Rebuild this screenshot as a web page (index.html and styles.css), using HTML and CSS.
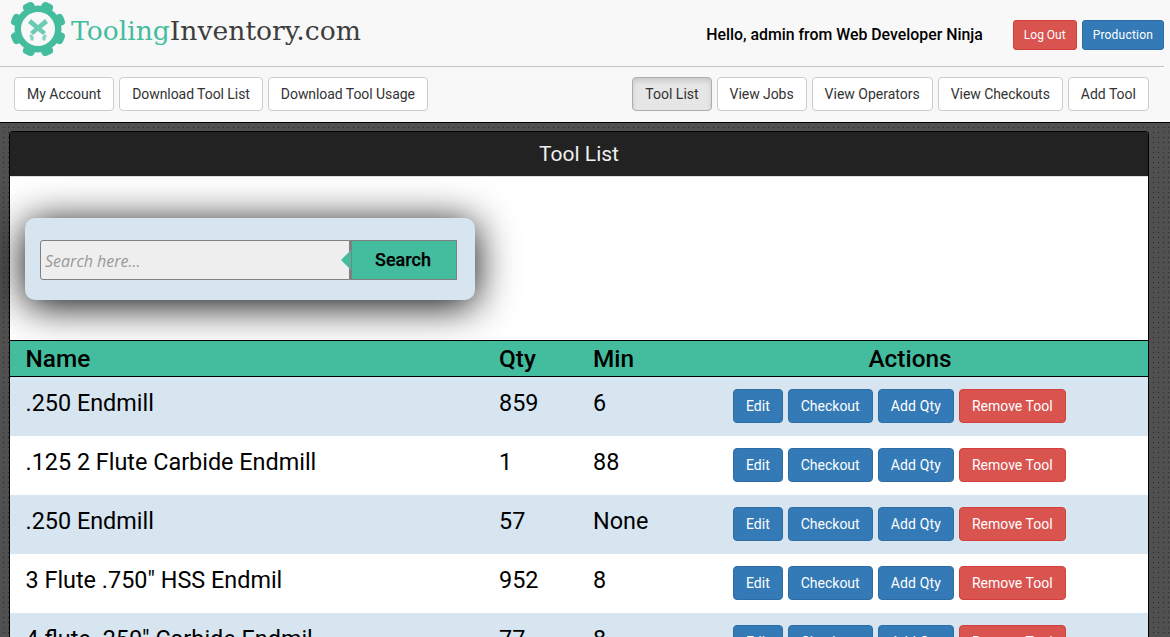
FILE: index.html
```html
<!DOCTYPE html>
<html lang="en">
<head>
  <meta charset="UTF-8">
  <title>Tool List</title>
  <meta name="viewport" content="width=device-width, initial-scale=1.0">
  <link rel="stylesheet" href="styles.css">
</head>
<body>

  <header class="topbar">
    <div class="brand">
      <svg class="brand-logo" width="60" height="60" viewBox="0 0 60 60">
        <g fill="#44bd9f">
          <rect x="24" y="1" width="12" height="56" rx="4" transform="rotate(22.5 30 29)"/>
          <rect x="24" y="1" width="12" height="56" rx="4" transform="rotate(67.5 30 29)"/>
          <rect x="24" y="1" width="12" height="56" rx="4" transform="rotate(112.5 30 29)"/>
          <rect x="24" y="1" width="12" height="56" rx="4" transform="rotate(157.5 30 29)"/>
          <circle cx="30" cy="29" r="23.5"/>
        </g>
        <circle cx="30" cy="29" r="17" fill="#f8f8f8"/>
        <g fill="#6ccbb3">
          <path d="M20 23l3-4 15 13-3 3z"/>
          <path d="M40 23l-3-4-15 13 3 3z"/>
          <path d="M21 36l2-2 3 3-2 2zM39 36l-2-2-3 3 2 2z" opacity=".8"/>
          <circle cx="24" cy="39" r="1.8" opacity=".8"/>
          <circle cx="36" cy="39" r="1.8" opacity=".8"/>
        </g>
      </svg>
      <span class="brand-name"><span class="brand-accent">Tooling</span>Inventory.com</span>
    </div>
    <div class="account">
      <span class="hello">Hello, admin from Web Developer Ninja</span>
      <a class="btn btn-sm btn-danger">Log Out</a>
      <a class="btn btn-sm btn-primary btn-wide">Production</a>
    </div>
  </header>

  <nav class="navbar">
    <div class="btn-row">
      <a class="btn">My Account</a>
      <a class="btn btn-tight">Download Tool List</a>
      <a class="btn btn-tight">Download Tool Usage</a>
    </div>
    <div class="btn-row">
      <a class="btn active">Tool List</a>
      <a class="btn btn-tight">View Jobs</a>
      <a class="btn">View Operators</a>
      <a class="btn btn-tight">View Checkouts</a>
      <a class="btn">Add Tool</a>
    </div>
  </nav>

  <main class="content">
    <section class="panel">
      <h1 class="panel-heading">Tool List</h1>
      <div class="search-area">
        <form class="search-box">
          <input class="search-input" type="text" placeholder="Search here...">
          <button class="search-btn" type="button">Search</button>
        </form>
      </div>
      <table class="tools">
        <thead>
          <tr>
            <th class="col-name">Name</th>
            <th class="col-qty">Qty</th>
            <th class="col-min">Min</th>
            <th class="col-actions">Actions</th>
          </tr>
        </thead>
        <tbody>
          <tr>
            <td>.250 Endmill</td><td>859</td><td>6</td>
            <td class="actions"><a class="btn btn-primary">Edit</a><a class="btn btn-primary">Checkout</a><a class="btn btn-primary btn-qty">Add Qty</a><a class="btn btn-danger">Remove Tool</a></td>
          </tr>
          <tr>
            <td>.125 2 Flute Carbide Endmill</td><td>1</td><td>88</td>
            <td class="actions"><a class="btn btn-primary">Edit</a><a class="btn btn-primary">Checkout</a><a class="btn btn-primary btn-qty">Add Qty</a><a class="btn btn-danger">Remove Tool</a></td>
          </tr>
          <tr>
            <td>.250 Endmill</td><td>57</td><td>None</td>
            <td class="actions"><a class="btn btn-primary">Edit</a><a class="btn btn-primary">Checkout</a><a class="btn btn-primary btn-qty">Add Qty</a><a class="btn btn-danger">Remove Tool</a></td>
          </tr>
          <tr>
            <td>3 Flute .750" HSS Endmil</td><td>952</td><td>8</td>
            <td class="actions"><a class="btn btn-primary">Edit</a><a class="btn btn-primary">Checkout</a><a class="btn btn-primary btn-qty">Add Qty</a><a class="btn btn-danger">Remove Tool</a></td>
          </tr>
          <tr>
            <td>4 flute .250" Carbide Endmil</td><td>77</td><td>8</td>
            <td class="actions"><a class="btn btn-primary">Edit</a><a class="btn btn-primary">Checkout</a><a class="btn btn-primary btn-qty">Add Qty</a><a class="btn btn-danger">Remove Tool</a></td>
          </tr>
        </tbody>
      </table>
    </section>
  </main>

</body>
</html>
```

FILE: styles.css
```css
html, body { height: 637px; overflow: hidden; }
body { margin: 0; font-family: Roboto, Arial, sans-serif; font-size: 14px; color: #000; background: #f8f8f8; }

.topbar { display: flex; justify-content: space-between; align-items: center; height: 67px; box-sizing: border-box; margin-right: 6px; border-bottom: 1px solid #c9c2c2; }
.brand { display: flex; align-items: center; padding-left: 8px; margin-top: -6px; }
.brand-logo { display: block; }
.brand-name { margin-left: 3px; font-family: "DejaVu Serif", serif; font-size: 26.6px; color: #3d3d3d; }
.brand-accent { color: #44bd9f; }
.account { display: flex; align-items: center; margin-top: 3px; }
.hello { margin-right: 25px; font-size: 15.85px; font-weight: 500; }

.btn { display: inline-block; box-sizing: border-box; height: 34px; padding: 6px 12px; font-size: 14px; line-height: 20px; color: #333; background: #fff; border: 1px solid #ccc; border-radius: 4px; white-space: nowrap; }
.btn-sm { height: 30px; padding: 5px 10px; font-size: 12px; line-height: 18px; border-radius: 3px; }
.btn-primary { color: #fff; background: #337ab7; border-color: #2e6da4; }
.btn-danger { color: #fff; background: #d9534f; border-color: #d43f3a; }
.btn.active { background: #e6e6e6; border-color: #adadad; box-shadow: inset 0 3px 5px rgba(0, 0, 0, .125); }
.btn-tight { letter-spacing: -0.06px; }
.btn-wide { letter-spacing: 0.2px; }
.btn-qty { letter-spacing: 0.15px; }
.account .btn { margin-left: 5px; }

.navbar { display: flex; justify-content: space-between; height: 56px; padding: 10px 21px 0 14px; box-sizing: border-box; border-bottom: 1px solid #000; }
.btn-row { display: flex; gap: 5px; }

.content { height: 514px; padding: 8px 21px 0 9px; box-sizing: border-box; background-color: #505050; background-image: radial-gradient(circle at 0.5px 0.5px, #262626 0.75px, transparent 0.75px); background-size: 5px 5px; background-position: 3px 4px; }
.panel { height: 100%; box-sizing: border-box; background: #fff; border: 1px solid #000; border-bottom: 0; border-radius: 4px 4px 0 0; }
.panel-heading { margin: 0; height: 45px; font-size: 21px; font-weight: 400; line-height: 44px; text-align: center; color: #f0f0f0; background: #222; border-bottom: 1px solid #ddd; box-sizing: border-box; }

.search-area { height: 163px; padding: 41px 0 0 15px; box-sizing: border-box; }
.search-box { display: flex; width: 450px; height: 82px; padding: 22px 18px 20px 15px; box-sizing: border-box; background: #d7e5f0; border-radius: 10px; box-shadow: 0 5px 40px #000; }
.search-input { width: 310px; height: 40px; padding: 2px 4px 0; box-sizing: border-box; font-family: "Open Sans", sans-serif; font-size: 16px; font-style: italic; background: #eee; border: 1px solid #808080; border-radius: 3px 0 0 3px; outline: 0; }
.search-input::placeholder { color: #999; }
.search-btn { position: relative; width: 107px; height: 40px; padding: 0 2px 2px 0; font-family: Roboto, sans-serif; font-size: 18px; font-weight: 500; color: #000; -webkit-text-stroke: 0.25px #000; background: #44bd9f; border: 1px solid #808080; border-left-width: 2px; border-radius: 0; }
.search-btn::before { content: ""; position: absolute; top: 9px; left: -11.5px; border-style: solid; border-width: 10px 10.5px 10px 0; border-color: transparent #44bd9f transparent transparent; }

.tools { width: 100%; table-layout: fixed; border-collapse: collapse; background: #fff; }
.tools th { height: 36px; padding: 0 16px; box-sizing: border-box; font-size: 24.4px; font-weight: 500; line-height: 30px; text-align: left; background: #44bd9f; border-top: 1px solid #000; border-bottom: 1px solid #000; }
.tools td { height: 59px; padding: 12px 16px 0; box-sizing: border-box; font-size: 23.4px; line-height: 28px; vertical-align: top; }
.tools th:first-child, .tools td:first-child { padding-left: 15.5px; }
.tools tbody tr:nth-child(odd) { background: #d7e5f0; }
.tools .col-name { width: 473px; }
.tools .col-qty { width: 94px; }
.tools .col-min { width: 140px; }
.tools .col-actions { padding-right: 61px; text-align: center; }
.tools td.actions { white-space: nowrap; }
.actions .btn { margin-right: 5px; vertical-align: top; }
```
